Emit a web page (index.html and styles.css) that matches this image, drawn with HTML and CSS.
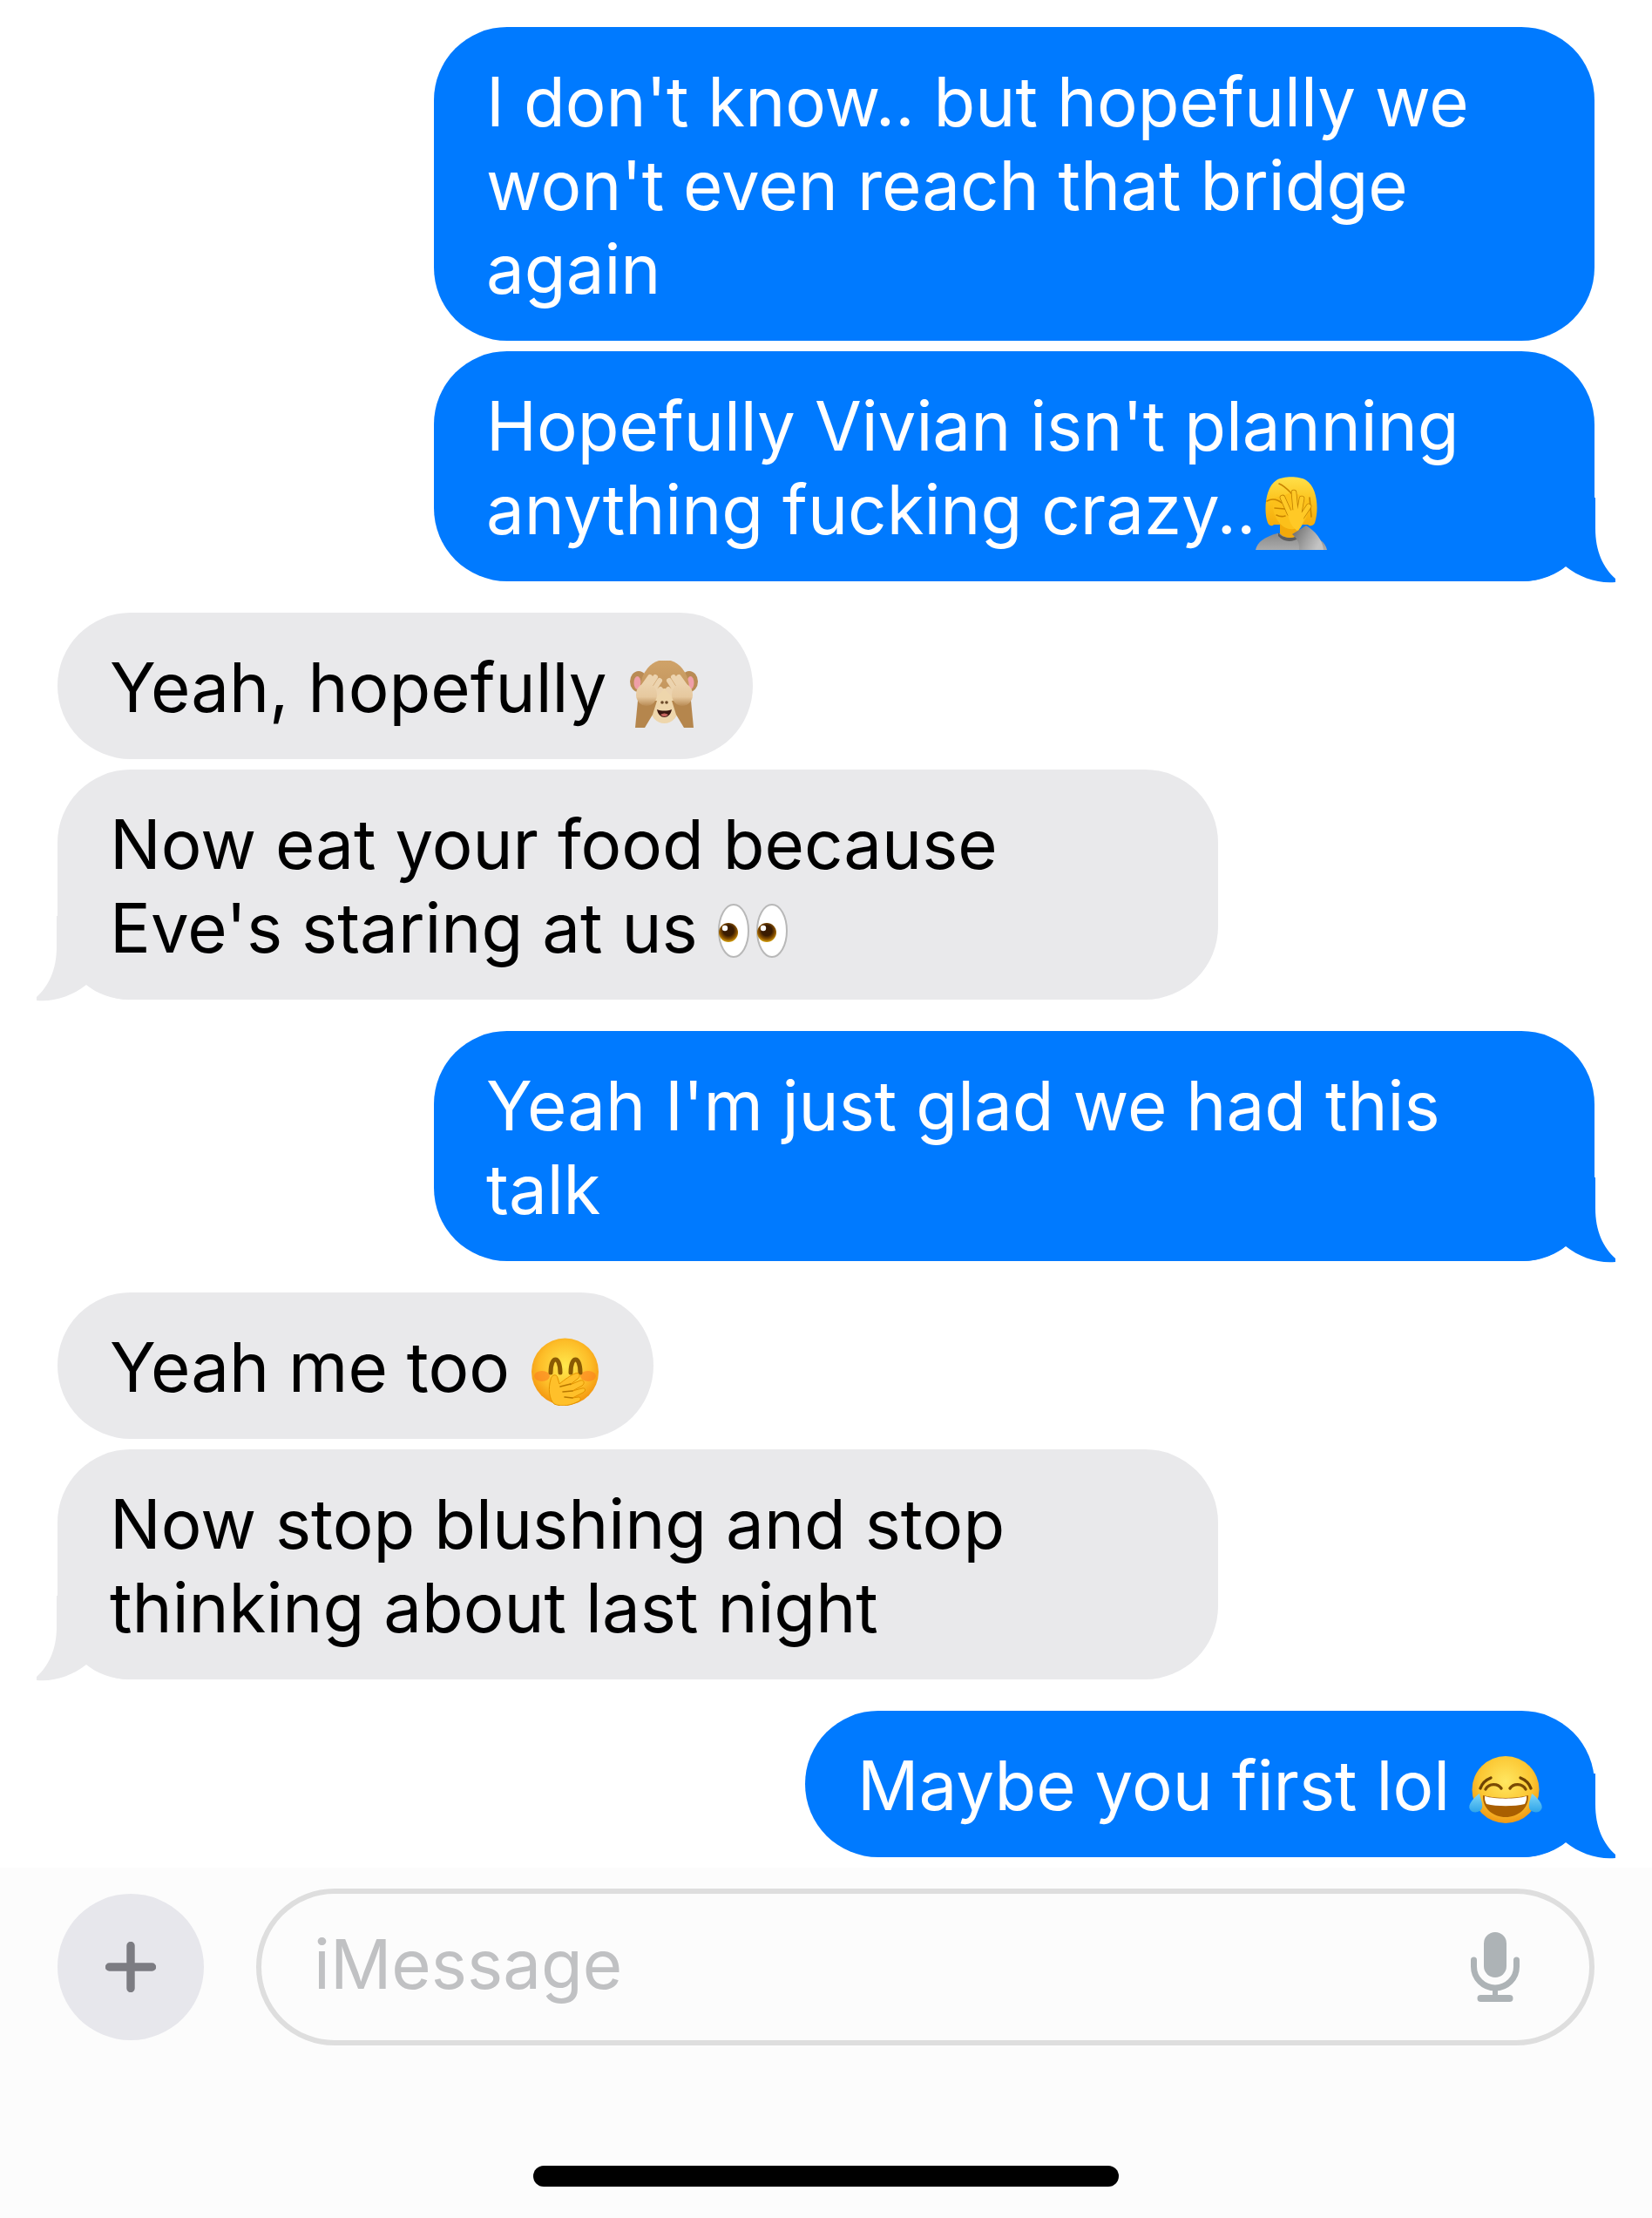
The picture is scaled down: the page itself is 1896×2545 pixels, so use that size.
FILE: index.html
```html
<!DOCTYPE html>
<html lang="en">
<head>
  <meta charset="UTF-8">
  <meta name="viewport" content="width=device-width, initial-scale=1.0">
  <title>Messages</title>
  <link rel="stylesheet" href="styles.css">
</head>
<body>
  <div class="thread">
    <div class="bubble sent wide">I don't know.. but hopefully we<br>won't even reach that bridge<br>again</div>
    <div class="bubble sent wide close">Hopefully Vivian isn't planning<br>anything fucking crazy..<svg class="emoji facepalm" viewBox="0 0 82 84">
        <defs>
          <linearGradient id="fpHair" x1="0" y1="0" x2="0" y2="1"><stop offset="0" stop-color="#ffe04a"/><stop offset="0.5" stop-color="#fcc21b"/><stop offset="1" stop-color="#f4ab0c"/></linearGradient>
          <linearGradient id="fpBody" x1="0" y1="0" x2="0" y2="1"><stop offset="0" stop-color="#8a8a8a"/><stop offset="1" stop-color="#ababab"/></linearGradient>
          <linearGradient id="fpArm" x1="0" y1="0" x2="1" y2="0.4"><stop offset="0" stop-color="#666"/><stop offset="0.6" stop-color="#a2a2a2"/><stop offset="1" stop-color="#c4c4c4"/></linearGradient>
        </defs>
        <path d="M0 84C2 75 10 69 25 65H58C72 69 80 75 82 84Z" fill="url(#fpBody)"/>
        <path d="M26 64C30 71 44 72 50 66V70C42 76 32 75 26 68Z" fill="#5c5c5c"/>
        <path d="M28 54H50V66C44 72 33 71 28 65Z" fill="#f2a90a"/>
        <path d="M14 53C9 40 11 12 24 4C32-1 50-1 58 4C71 12 73 38 68 53C66 57 62 57 60 55L21 55C19 57 16 57 14 53Z" fill="url(#fpHair)"/>
        <path d="M20 26C24 22 30 24 36 20C44 16 56 22 60 30C62 40 58 56 44 60C32 62 22 50 20 36Z" fill="#fcc01a"/>
        <path d="M27 8C34 11 38 16 42 20M13 28C20 24 25 26 30 30M22 36L34 37M24 44C28 46 31 46 34 45M62 24L64 46" fill="none" stroke="#c98400" stroke-width="1.600" stroke-linecap="round"/>
        <g fill="none" stroke-linecap="round">
          <path d="M31 24L39 42M44 18L46 40M53 25L50 42M61 34L53 46" stroke="#c07f00" stroke-width="6.600"/>
          <path d="M31 24L39 42M44 18L46 40M53 25L50 42M61 34L53 46" stroke="#ffc926" stroke-width="5"/>
        </g>
        <path d="M37 40C42 37 50 38 55 43C56 50 54 58 48 62C42 58 37 50 37 40Z" fill="#ffc926"/>
        <path d="M42 66L58 56C68 62 77 72 78 84H50C51 77 48 71 42 66Z" fill="url(#fpArm)"/>
      </svg><svg class="tail" viewBox="0 0 107 98"><path d="M0 0H84V35C84 62 93 80 107 93V97C88 99 66 92 50 79C38 89 20 96 0 96Z"/></svg></div>

    <div class="bubble got gap">Yeah, hopefully <svg class="emoji monkey" viewBox="0 0 78 77">
        <defs>
          <linearGradient id="mkHead" x1="0" y1="0" x2="0" y2="1"><stop offset="0" stop-color="#d0a369"/><stop offset="1" stop-color="#b98b54"/></linearGradient>
          <linearGradient id="mkPalm" x1="0" y1="0" x2="0" y2="1"><stop offset="0" stop-color="#ecd3ae"/><stop offset="0.6" stop-color="#e6c89e"/><stop offset="1" stop-color="#b98b54"/></linearGradient>
        </defs>
        <ellipse cx="10" cy="24" rx="10" ry="12" fill="#b98b54"/>
        <ellipse cx="68" cy="24" rx="10" ry="12" fill="#b98b54"/>
        <ellipse cx="8.500" cy="25.500" rx="4" ry="7.500" fill="#ef9fa8"/>
        <ellipse cx="69.500" cy="25.500" rx="4" ry="7.500" fill="#ef9fa8"/>
        <ellipse cx="40" cy="32" rx="28" ry="33" fill="url(#mkHead)"/>
        <ellipse cx="39.500" cy="52" rx="17" ry="20" fill="#eed6ac"/>
        <circle cx="37" cy="48" r="1.800" fill="#6b4a2a"/>
        <circle cx="42" cy="48" r="1.800" fill="#6b4a2a"/>
        <path d="M31 56C36 58 43 58 48 56C47 62 43 65 39.500 65C36 65 32 62 31 56Z" fill="#3a1710"/>
        <path d="M35 62C38 60 41 60 44 62C41 65 38 65 35 62Z" fill="#c8655e"/>
        <path d="M6 77L9 46L31 46L26 62L17 77Z" fill="#b5864d"/>
        <path d="M73 77L70 46L48 46L53 62L62 77Z" fill="#b5864d"/>
        <g fill="none" stroke="#ecd3ae" stroke-width="6" stroke-linecap="round">
          <path d="M13 33L23 19M20 33L29 19M25 37L34 23M28 40L35 33"/>
          <path d="M66 33L56 19M59 33L50 19M54 37L45 23M51 40L44 33"/>
        </g>
        <ellipse cx="19" cy="39" rx="12" ry="13" fill="url(#mkPalm)"/>
        <ellipse cx="60" cy="39" rx="12" ry="13" fill="url(#mkPalm)"/>
      </svg></div>
    <div class="bubble got wide close">Now eat your food because<br>Eve's staring at us <svg class="emoji eyes" viewBox="0 0 82 63">
        <defs>
          <radialGradient id="eyIris" cx="0.5" cy="0.4" r="0.6"><stop offset="0.45" stop-color="#3a1c02"/><stop offset="0.75" stop-color="#8a5200"/><stop offset="1" stop-color="#d6a210"/></radialGradient>
        </defs>
        <ellipse cx="18" cy="32" rx="17" ry="30" fill="#fff" stroke="#b8b8b8" stroke-width="2"/>
        <ellipse cx="62" cy="32" rx="17" ry="30" fill="#fff" stroke="#b8b8b8" stroke-width="2"/>
        <circle cx="12" cy="34" r="11" fill="url(#eyIris)"/>
        <circle cx="56" cy="34" r="11" fill="url(#eyIris)"/>
        <circle cx="8" cy="29" r="3.200" fill="#fff"/>
        <circle cx="52" cy="29" r="3.200" fill="#fff"/>
      </svg><svg class="tail left" viewBox="0 0 107 98"><path d="M0 0H84V35C84 62 93 80 107 93V97C88 99 66 92 50 79C38 89 20 96 0 96Z"/></svg></div>

    <div class="bubble sent wide gap">Yeah I'm just glad we had this<br>talk<svg class="tail" viewBox="0 0 107 98"><path d="M0 0H84V35C84 62 93 80 107 93V97C88 99 66 92 50 79C38 89 20 96 0 96Z"/></svg></div>

    <div class="bubble got gap">Yeah me too <svg class="emoji covered" viewBox="0 0 77 78">
        <defs>
          <radialGradient id="cvFace" cx="0.5" cy="0.42" r="0.58"><stop offset="0" stop-color="#ffe94d"/><stop offset="0.65" stop-color="#fdbd28"/><stop offset="1" stop-color="#f3950f"/></radialGradient>
        </defs>
        <circle cx="38.500" cy="39" r="38.500" fill="url(#cvFace)"/>
        <ellipse cx="12" cy="44" rx="9" ry="6" fill="#fb7f22" opacity="0.6"/>
        <ellipse cx="65" cy="44" rx="9" ry="6" fill="#fb7f22" opacity="0.6"/>
        <path d="M22 40C22 20 33 20 33 40M45 40C45 20 56 20 56 40" fill="none" stroke="#8a5a04" stroke-width="5" stroke-linecap="round"/>
        <path d="M26 76C20 70 19 58 22 48C23 42 29 41 30 46L32 53C38 48 45 43 50 41C55 39 57 44 53 47L44 54L56 49C60 48 62 52 58 55L47 61L58 58C62 57 63 61 59 63L47 69L54 68C57 68 57 72 54 73C46 77 36 80 26 76Z" fill="#ffc02a" stroke="#e29200" stroke-width="1"/>
        <path d="M33 56L45 53M36 62L47 61M38 68L47 69" fill="none" stroke="#b87700" stroke-width="1.600" stroke-linecap="round"/>
      </svg></div>
    <div class="bubble got wide close">Now stop blushing and stop<br>thinking about last night<svg class="tail left" viewBox="0 0 107 98"><path d="M0 0H84V35C84 62 93 80 107 93V97C88 99 66 92 50 79C38 89 20 96 0 96Z"/></svg></div>

    <div class="bubble sent gap">Maybe you first lol <svg class="emoji joy" viewBox="0 0 84 77">
        <defs>
          <radialGradient id="jyFace" cx="0.5" cy="0.38" r="0.6"><stop offset="0" stop-color="#ffe761"/><stop offset="0.65" stop-color="#fcc733"/><stop offset="1" stop-color="#f09c17"/></radialGradient>
          <linearGradient id="jyTear" x1="0" y1="0" x2="0" y2="1"><stop offset="0" stop-color="#7fd6f7"/><stop offset="1" stop-color="#2ea4ea"/></linearGradient>
        </defs>
        <circle cx="42" cy="38.500" r="38.500" fill="url(#jyFace)"/>
        <path d="M13 37C15 31 20 27 25 25M71 37C69 31 64 27 59 25" fill="none" stroke="#6f4304" stroke-width="3.400" stroke-linecap="round"/>
        <path d="M19 38C23 31 33 31 37 37M47 37C51 31 61 31 65 38" fill="none" stroke="#7a4a04" stroke-width="3.400" stroke-linecap="round"/>
        <path d="M16 45C30 49 54 49 68 45C69 60 56 70 42 70C28 70 15 60 16 45Z" fill="#a95f00"/>
        <path d="M18 46C30 49.500 54 49.500 66 46C66.500 50 65 53 64 55C52 58 32 58 20 55C19 53 17.500 50 18 46Z" fill="#fff"/>
        <path d="M12 43C13 49 16 53 15 59C14 65 3 67 0.500 60C-1 55 6 47 12 43Z" fill="url(#jyTear)"/>
        <path d="M72 43C71 49 68 53 69 59C70 65 81 67 83.500 60C85 55 78 47 72 43Z" fill="url(#jyTear)"/>
      </svg><svg class="tail" viewBox="0 0 107 98"><path d="M0 0H84V35C84 62 93 80 107 93V97C88 99 66 92 50 79C38 89 20 96 0 96Z"/></svg></div>
  </div>

  <div class="composer">
    <div class="input-row">
      <div class="plus">
        <svg viewBox="0 0 58 58" width="58" height="58"><path d="M29 4.500V53.500M4.500 29H53.500" fill="none" stroke="#7c7c82" stroke-width="9.400" stroke-linecap="round"/></svg>
      </div>
      <div class="field">
        <span class="placeholder">iMessage</span>
        <svg class="mic" viewBox="0 0 56 80" width="56" height="80">
          <rect x="15" y="0" width="26" height="52" rx="13" fill="#adb3b6"/>
          <path d="M3.500 32V39.500A24.500 24.500 0 0 0 52.500 39.500V32" fill="none" stroke="#adb3b6" stroke-width="7" stroke-linecap="round"/>
          <rect x="25" y="62" width="6" height="12" fill="#adb3b6"/>
          <rect x="7.500" y="72" width="41" height="8" rx="4" fill="#adb3b6"/>
        </svg>
      </div>
    </div>
    <div class="home-bar"></div>
  </div>
</body>
</html>
```
FILE: styles.css
```css
* {
  box-sizing: border-box;
  margin: 0;
  padding: 0;
}
body {
  background-color: #fff;
  font-family: Inter, "Liberation Sans", sans-serif;
  font-size: 78px;
  line-height: 96px;
}
.thread {
  display: flex;
  flex-direction: column;
  padding: 31px 66px 0 66px;
}
.bubble {
  position: relative;
  isolation: isolate;
  width: fit-content;
  padding: 38px 63px 34px 60px;
  border-radius: 84px;
  white-space: nowrap;
}
.bubble.wide {
  width: 1332px;
}
.bubble.close {
  margin-top: 12px;
}
.bubble.gap {
  margin-top: 36px;
}
.sent {
  align-self: flex-end;
  background-color: #007aff;
  color: #fff;
  fill: #007aff;
}
.got {
  align-self: flex-start;
  background-color: #e9e9eb;
  color: #000;
  fill: #e9e9eb;
}
/* speech tail sits over the bottom corner of the last bubble, behind its text */
.tail {
  position: absolute;
  z-index: -1;
  right: -24px;
  bottom: -2px;
  width: 107px;
  height: 98px;
}
.tail.left {
  right: auto;
  left: -24px;
  transform: scaleX(-1);
}
.emoji {
  display: inline-block;
}
.facepalm {
  width: 82px;
  height: 84px;
  vertical-align: -18px;
}
.monkey {
  width: 78px;
  height: 77px;
  margin-left: 4px;
  vertical-align: -18px;
}
.eyes {
  width: 82px;
  height: 63px;
  margin-left: 1px;
  vertical-align: -6px;
}
.covered {
  width: 77px;
  height: 78px;
  margin-left: 3px;
  vertical-align: -16px;
}
.joy {
  width: 84px;
  height: 77px;
  margin-right: -3px;
  vertical-align: -15px;
}
.composer {
  margin-top: 12px;
  padding: 24px 66px 36px 66px;
  background-color: #fcfcfc;
}
.input-row {
  display: flex;
  align-items: center;
  gap: 60px;
}
.plus {
  display: flex;
  flex-shrink: 0;
  align-items: center;
  justify-content: center;
  width: 168px;
  height: 168px;
  border-radius: 50%;
  background-color: #e7e7ec;
}
.field {
  display: flex;
  flex: 1;
  align-items: center;
  justify-content: space-between;
  height: 180px;
  padding: 0 80px 0 60px;
  border: 6px solid #dedede;
  border-radius: 90px;
}
.placeholder {
  padding-bottom: 6px;
  color: #c0c1c3;
}
.mic {
  display: block;
}
.home-bar {
  width: 672px;
  height: 24px;
  margin: 138px auto 0 auto;
  border-radius: 12px;
  background-color: #000;
}
```
